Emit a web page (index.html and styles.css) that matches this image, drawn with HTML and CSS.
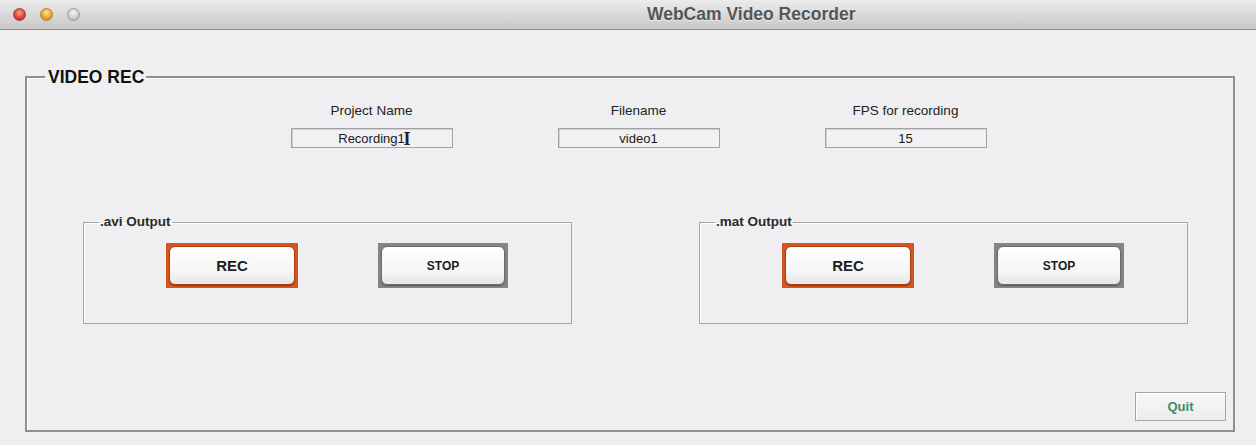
FILE: index.html
```html
<!DOCTYPE html>
<html>
<head>
<meta charset="utf-8">
<link rel="stylesheet" href="styles.css">
</head>
<body>
<div class="window">
  <div class="titlebar">
    <div class="lights">
      <span class="light red"></span>
      <span class="light yellow"></span>
      <span class="light gray"></span>
    </div>
    <div class="title">WebCam Video Recorder</div>
  </div>
  <div class="content">
    <fieldset class="main">
      <legend class="main-legend">VIDEO REC</legend>
      <div class="fields">
        <div class="field">
          <label class="field-label">Project Name</label>
          <div class="input"><span>Recording1</span><span class="cursor">I</span></div>
        </div>
        <div class="field">
          <label class="field-label">Filename</label>
          <div class="input"><span>video1</span></div>
        </div>
        <div class="field">
          <label class="field-label">FPS for recording</label>
          <div class="input"><span>15</span></div>
        </div>
      </div>
      <div class="outputs">
        <fieldset class="sub">
          <legend class="sub-legend">.avi Output</legend>
          <div class="buttons">
            <button class="btn rec"><span class="btn-face">REC</span></button>
            <button class="btn stop"><span class="btn-face">STOP</span></button>
          </div>
        </fieldset>
        <fieldset class="sub">
          <legend class="sub-legend">.mat Output</legend>
          <div class="buttons">
            <button class="btn rec"><span class="btn-face">REC</span></button>
            <button class="btn stop"><span class="btn-face">STOP</span></button>
          </div>
        </fieldset>
      </div>
      <div class="footer">
        <button class="quit">Quit</button>
      </div>
    </fieldset>
  </div>
</div>
</body>
</html>
```

FILE: styles.css
```css
* { box-sizing: border-box; }
html, body {
  margin: 0;
  padding: 0;
  background: #efeef0;
  font-family: "Liberation Sans", Arial, sans-serif;
}
.window {
  width: 1256px;
  height: 445px;
  overflow: hidden;
  background: #efeef0;
}
.titlebar {
  height: 30px;
  background: linear-gradient(#ececec, #d6d6d6 60%, #c8c8c8);
  border-bottom: 1px solid #8e8e8e;
  display: flex;
  align-items: center;
}
.lights {
  display: flex;
  gap: 14px;
  padding-left: 13px;
}
.light {
  width: 13px;
  height: 13px;
  border-radius: 50%;
  display: block;
}
.light.red {
  background: radial-gradient(circle at 50% 35%, #ff9a90, #e0443a 55%, #a8221c);
  border: 1px solid #a33a33;
}
.light.yellow {
  background: radial-gradient(circle at 50% 35%, #ffe39a, #e9a52b 55%, #b87914);
  border: 1px solid #b0822c;
}
.light.gray {
  background: radial-gradient(circle at 50% 35%, #f5f5f5, #cfcfcf 55%, #a9a9a9);
  border: 1px solid #9c9c9c;
}
.title {
  flex: 1;
  padding-left: 567px;
  font-size: 17.5px;
  font-weight: bold;
  color: #555;
  text-shadow: 0 1px 0 rgba(255,255,255,0.6);
}
.content {
  padding: 38px 21px 0 25px;
}
.main {
  margin: 0;
  width: 1210px;
  height: 364px;
  border: 2px solid #8f8f8f;
  box-shadow: inset 1px 1px 0 #ffffff;
  padding: 0;
  display: flex;
  flex-direction: column;
}
.main-legend {
  margin-left: 18px;
  padding: 0 2px 0 3px;
  font-size: 17.5px;
  font-weight: bold;
  color: #111;
  line-height: 18px;
}
.fields {
  display: grid;
  grid-template-columns: repeat(3, 267px);
  padding-left: 211px;
  padding-top: 17px;
}
.field {
  display: flex;
  flex-direction: column;
  align-items: center;
}
.field-label {
  font-size: 13.5px;
  color: #222;
  line-height: 16px;
  height: 16px;
}
.input {
  margin-top: 9px;
  width: 162px;
  height: 20px;
  border: 1px solid #a2a2a2;
  background: #f1f0f2;
  box-shadow: inset 1px 1px 0 #d0d0d0;
  display: flex;
  align-items: center;
  justify-content: center;
  font-size: 13px;
  color: #1a1a1a;
  position: relative;
}
.cursor {
  position: absolute;
  left: 112px;
  top: 1px;
  font-family: "Liberation Serif", serif;
  font-size: 18px;
  font-weight: bold;
  color: #222;
  line-height: 18px;
}
.outputs {
  display: flex;
  gap: 127px;
  padding-left: 56px;
  margin-top: 66px;
}
.sub {
  margin: 0;
  width: 489px;
  height: 110px;
  border: 1px solid #a5a5a5;
  box-shadow: inset 1px 1px 0 #ffffff;
  padding: 0;
}
.sub-legend {
  margin-left: 15px;
  padding: 0 1px;
  font-size: 13.5px;
  font-weight: bold;
  color: #2a2a2a;
  line-height: 16px;
}
.buttons {
  display: flex;
  gap: 80px;
  padding-left: 82px;
  padding-top: 13px;
}
.btn {
  width: 132px;
  height: 45px;
  padding: 3px;
  border: none;
  display: block;
  cursor: pointer;
}
.btn.rec { background: #d9541c; }
.btn.stop { background: #858585; width: 130px; }
.btn-face {
  display: flex;
  align-items: center;
  justify-content: center;
  width: 100%;
  height: 100%;
  border-radius: 6px;
  background: linear-gradient(#ffffff, #f4f4f4 70%, #e6e6e6);
  box-shadow: 0 1px 1px rgba(0,0,0,0.35);
  font-family: "Liberation Sans", Arial, sans-serif;
  font-weight: bold;
  color: #1d1d1d;
}
.btn.rec .btn-face { font-size: 15px; border: 1px solid #a84014; }
.btn.stop .btn-face { font-size: 12px; border: 1px solid #6d6d6d; }
.footer {
  display: flex;
  justify-content: flex-end;
  padding-right: 7px;
  margin-top: 68px;
}
.quit {
  width: 91px;
  height: 29px;
  border: 1px solid #a6a6a6;
  background: linear-gradient(#f8f8f8, #ececec);
  box-shadow: inset 1px 1px 0 #ffffff;
  font-family: "Liberation Sans", Arial, sans-serif;
  font-size: 13px;
  font-weight: bold;
  color: #3d8a6c;
  cursor: pointer;
}
```
